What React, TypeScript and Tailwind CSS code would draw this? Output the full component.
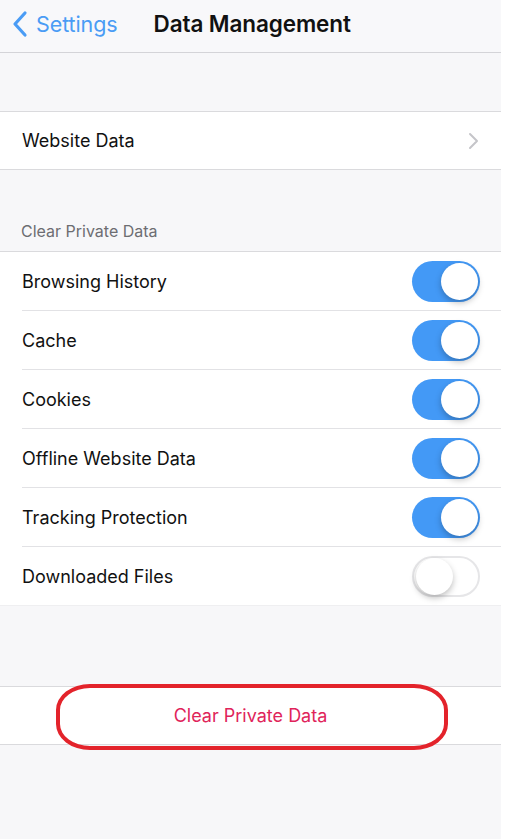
import { useState } from "react"

const items = [
    { label: "Browsing History", on: true },
    { label: "Cache", on: true },
    { label: "Cookies", on: true },
    { label: "Offline Website Data", on: true },
    { label: "Tracking Protection", on: true },
    { label: "Downloaded Files", on: false },
]

const Toggle = ({ on, onClick }: { on: boolean; onClick: () => void }) => {
    return (
        <button
            onClick={onClick}
            className={`relative w-[68px] h-[41px] rounded-full flex items-center px-[2px] ${on ? "bg-[#4399f6] justify-end" : "bg-white border-2 border-[#e6e6e8] justify-start px-0"}`}
        >
            <span className="block w-[37px] h-[37px] rounded-full bg-white shadow-[0_3px_6px_rgba(0,0,0,0.25)]" />
        </button>
    )
}

const App = () => {
    const [toggles, setToggles] = useState(items.map((i) => i.on))

    return (
        <div className="min-h-[839px] w-[509px] bg-white" style={{ fontFamily: "Inter, 'Noto Sans', sans-serif" }}>
            <div className="w-[501px] min-h-[839px] bg-[#f7f7f9]">
                {/* Nav bar */}
                <div className="h-[53px] flex items-center pb-[4px] border-b border-[#d4d4d8] bg-[#f8f8fa]">
                    <div className="flex items-center pl-[11px] text-[#4a9cf5]">
                        <svg width="18" height="28" viewBox="0 0 18 28" fill="none">
                            <path d="M14 3 L4 14 L14 25" stroke="#4a9cf5" strokeWidth="3.2" strokeLinecap="round" strokeLinejoin="round" />
                        </svg>
                        <span className="ml-[7px] text-[21.5px] tracking-[-0.1px]">Settings</span>
                    </div>
                    <span className="ml-[36px] text-[22.5px] font-semibold text-[#111] tracking-[-0.1px]">Data Management</span>
                </div>

                <div className="h-[58px]" />

                {/* Website Data */}
                <div className="bg-white border-y border-[#dadadd] h-[59px] flex items-center justify-between pl-[22px] pr-[22px]">
                    <span className="text-[18px] text-[#111]">Website Data</span>
                    <svg width="11" height="18" viewBox="0 0 11 18" fill="none">
                        <path d="M2 2 L9 9 L2 16" stroke="#c5c5c9" strokeWidth="2" strokeLinecap="round" strokeLinejoin="round" />
                    </svg>
                </div>

                <div className="h-[82px] flex items-end pl-[21px] pb-[8px] border-b border-[#dadadd]">
                    <span className="text-[16px] text-[#6d6d72]">Clear Private Data</span>
                </div>

                {/* Toggles */}
                <div className="bg-white">
                    {items.map((item, idx) => (
                        <div key={idx} className="pl-[22px]">
                            <div className={`flex items-center justify-between pr-[21px] ${idx < items.length - 1 ? "h-[59px] border-b border-[#e2e2e5]" : "h-[58px]"}`}>
                                <span className="text-[18px] text-[#111]">{item.label}</span>
                                <Toggle
                                    on={toggles[idx]}
                                    onClick={() => setToggles(toggles.map((t, i) => (i === idx ? !t : t)))}
                                />
                            </div>
                        </div>
                    ))}
                </div>

                <div className="h-[81px] border-t border-[#efeff1]" />

                {/* Clear button */}
                <div className="relative bg-white border-y border-[#dadadd] h-[59px] flex items-center justify-center">
                    <span className="text-[18px] text-[#e0245a]">Clear Private Data</span>
                    <div className="absolute left-[56px] top-[-3px] w-[392px] h-[66px] border-[4px] border-[#e3232b] rounded-[34px/26px]" />
                </div>
            </div>
        </div>
    )
}

export default App
